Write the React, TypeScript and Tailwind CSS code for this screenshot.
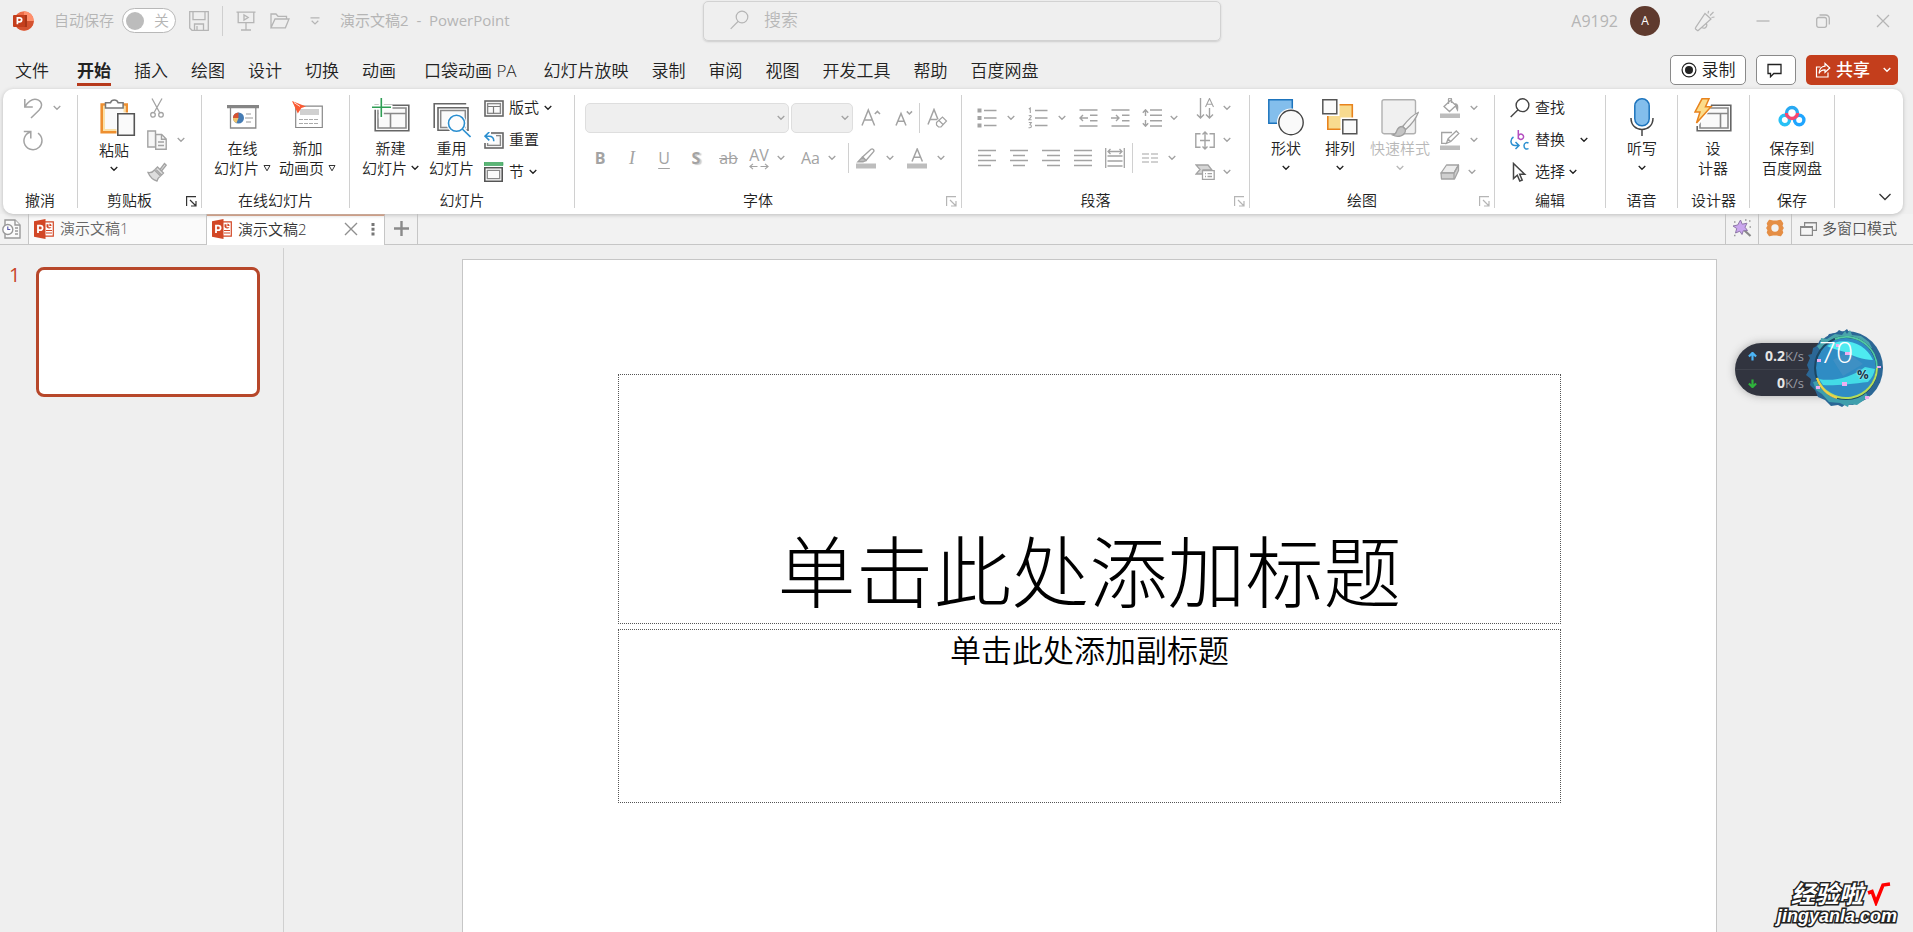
import type { ReactNode } from 'react';

const menuTabs = [
  '开始', '插入', '绘图', '设计', '切换', '动画', '口袋动画 PA', '幻灯片放映',
  '录制', '审阅', '视图', '开发工具', '帮助', '百度网盘',
];

function Chevron({ className = '' }: { className?: string }) {
  return (
    <svg className={`shrink-0 ${className}`} width="8" height="6" viewBox="0 0 8 6" fill="none" stroke="currentColor" strokeWidth="1.3">
      <path d="M.7 1 4 4.3 7.3 1" />
    </svg>
  );
}

function Triangle() {
  return (
    <svg className="shrink-0" width="8" height="8" viewBox="0 0 8 8" fill="none" stroke="#333">
      <path d="M1 1.5h6L4 6.8Z" />
    </svg>
  );
}

function Launcher({ muted = false }: { muted?: boolean }) {
  return (
    <button aria-label="更多选项" className={`w-5 flex justify-center ${muted ? 'text-[#b5b5b5]' : 'text-[#333]'}`}>
      <svg width="11" height="11" viewBox="0 0 11 11" fill="none" stroke="currentColor" strokeWidth="1.2">
        <path d="M.6 10V.6H10M4 4l5.5 5.5M10 5v5H5" />
      </svg>
    </button>
  );
}

function Group({ label, className, launcher, children }: {
  label: string;
  className: string;
  launcher?: 'on' | 'muted';
  children: ReactNode;
}) {
  return (
    <section aria-label={label} className={`flex flex-col shrink-0 my-1.5 border-r border-[#d0d0d0] ${className}`}>
      <div className="flex-1 flex items-start">{children}</div>
      <div className="flex h-3 leading-3">
        <span className="flex-1 -mt-0.5 text-center whitespace-nowrap">{label}</span>
        {launcher && <Launcher muted={launcher === 'muted'} />}
      </div>
    </section>
  );
}

function BigButton({ icon, lines, className = '' }: { icon: ReactNode; lines: ReactNode[]; className?: string }) {
  return (
    <button className={`flex flex-col items-center shrink-0 pt-[3px] ${className}`}>
      <span className="h-10">{icon}</span>
      {lines.map((line, i) => (
        <span key={i} className="h-5 leading-5 flex items-center gap-1 whitespace-nowrap">{line}</span>
      ))}
    </button>
  );
}

function SmallButton({ icon, label, text, drop = '' }: { icon: ReactNode; label: string; text?: boolean; drop?: string }) {
  return (
    <button aria-label={label} className="flex items-center h-[26px]">
      {icon}
      {text && <span className="ml-[5px] pb-0.5">{label}</span>}
      {drop && <Chevron className={drop} />}
    </button>
  );
}

function Tool({ label, className = '', drop = '', children }: { label: string; className?: string; drop?: string; children: ReactNode }) {
  return (
    <button aria-label={label} className={`flex items-center shrink-0 ${className}`}>
      {children}
      {drop && <Chevron className={drop} />}
    </button>
  );
}

function AppLogo() {
  return (
    <svg width="22" height="22" viewBox="0 0 22 22">
      <circle cx="12" cy="11" r="9.8" fill="#ed6c47" />
      <path d="M12 1.2A9.8 9.8 0 0 1 21.8 11H12Z" fill="#ff8f6b" />
      <path d="M2.3 12A9.8 9.8 0 0 0 21.8 11H12Z" fill="#d35230" />
      <path d="M6 5h9v12H6z" fill="#a83518" />
      <rect x="1" y="5" width="12" height="12" rx="1" fill="#c43e1c" />
      <path d="M5.4 14.3V7.8h2.3a2 2 0 0 1 0 4H5.6" fill="none" stroke="#fff" strokeWidth="1.7" />
    </svg>
  );
}

function DocIcon() {
  return (
    <svg width="20" height="20" viewBox="0 0 20 20">
      <path d="M10 2.8h9.3v14.4H10z" fill="#fff" stroke="#d24726" strokeWidth="1.2" />
      <path d="M12.5 5.2h2v3h3A3 3 0 0 1 12.5 8Z" fill="#d24726" />
      <path d="M15.4 4.6a2.6 2.6 0 0 1 2.3 2.4h-2.3Z" fill="#d24726" />
      <path d="M12 11.5h6M12 14h6" stroke="#d24726" strokeWidth="1.2" />
      <path d="M0 2.3 11.5 0v20L0 17.7Z" fill="#d24726" />
      <path d="M4 14V6.6h2.3a2.2 2.2 0 0 1 0 4.6H4" fill="none" stroke="#fff" strokeWidth="1.8" />
    </svg>
  );
}

function TitleBar() {
  return (
    <header className="flex items-center h-[42px] text-[#b5b5b5]">
      <div className="flex-1 flex items-center pl-3 pb-px">
        <AppLogo />
        <span className="ml-5">自动保存</span>
        <button role="switch" aria-checked="false" aria-label="自动保存" className="ml-2 w-[54px] h-[25px] rounded-full border border-[#b8b8b8] bg-white flex items-center justify-between pl-[3px] pr-[6px]">
          <span className="w-[18px] h-[18px] rounded-full bg-[#bcbcbc]" />
          <span>关</span>
        </button>
        <button aria-label="保存" className="ml-[13px]">
          <svg width="20" height="20" viewBox="0 0 20 20" fill="none" stroke="currentColor" strokeWidth="1.3">
            <path d="M.7.7h18.6v18.6H3L.7 17ZM4 .7v8h12v-8M5.5 19v-6h9v6M8 19v-4" />
          </svg>
        </button>
        <span className="ml-[13px] w-px h-[30px] bg-[#cfcfcf]" />
        <button aria-label="从头开始" className="ml-[13px]">
          <svg width="20" height="20" viewBox="0 0 20 20" fill="none" stroke="currentColor" strokeWidth="1.3">
            <path d="M.5 1.2h19M2.2 1.2v10.5h15.6V1.2M10 12v7M5 19h10" />
            <path d="M8 4v5l4.2-2.5Z" />
          </svg>
        </button>
        <button aria-label="打开" className="ml-[14px]">
          <svg width="20" height="18" viewBox="0 0 20 18" fill="none" stroke="currentColor" strokeWidth="1.3">
            <path d="M1 15.8V2h5l2 2.3h8.5V7M1 15.8 5 7h14l-3.6 8.8Z" />
          </svg>
        </button>
        <button aria-label="自定义快速访问工具栏" className="ml-5">
          <svg width="10" height="8" viewBox="0 0 10 8" fill="none" stroke="currentColor" strokeWidth="1.2">
            <path d="M.5.8h9M1.7 3.8 5 7l3.3-3.2" />
          </svg>
        </button>
        <h1 className="ml-5 whitespace-pre font-normal">演示文稿2  -  PowerPoint</h1>
      </div>
      <label className="ml-[22px] w-[518px] h-10 flex items-center rounded-[5px] border border-[#d2d2d2] shadow-[0_1px_2px_#ccc] pl-[26px] pb-0.5">
        <svg width="19" height="20" viewBox="0 0 19 20" fill="none" stroke="currentColor" strokeWidth="1.2">
          <circle cx="12" cy="7" r="5.8" />
          <path d="m8 11.5-7.3 7.3" />
        </svg>
        <input aria-label="搜索" placeholder="搜索" className="ml-[15px] flex-1 bg-transparent outline-none text-[17px] placeholder:text-[#b8b8b8]" />
      </label>
      <div className="flex-1 flex items-center justify-end pr-[23px] pb-px">
        <span className="text-base font-normal">A9192</span>
        <button aria-label="账户" className="ml-3 w-[30px] h-[30px] rounded-full bg-[#5f3a2e] text-white text-xs font-normal">A</button>
        <button aria-label="即将推出" className="ml-[34px]">
          <svg width="22" height="22" viewBox="0 0 22 22" fill="none" stroke="currentColor" strokeWidth="1.2">
            <path d="M11 3.5 17 9 4.5 20.3a1 1 0 0 1-1.4 0L1.6 19a1 1 0 0 1 0-1.3ZM8 17.5a3 3 0 0 0 4.5-3.7M14 3.5l.6-2.6M16 5.5 19.5 2M17.5 7.5l3-.5" />
          </svg>
        </button>
        <button aria-label="最小化" className="ml-10">
          <svg width="14" height="14" viewBox="0 0 14 14" stroke="currentColor" strokeWidth="1.3"><path d="M.5 7h13" /></svg>
        </button>
        <button aria-label="还原" className="ml-[46px]">
          <svg width="14" height="14" viewBox="0 0 14 14" fill="none" stroke="currentColor" strokeWidth="1.3">
            <rect x=".7" y="3.5" width="9.8" height="9.8" rx="2" />
            <path d="M3.5 1h6.2A3.6 3.6 0 0 1 13.3 4.6v6" />
          </svg>
        </button>
        <button aria-label="关闭" className="ml-[46px]">
          <svg width="14" height="14" viewBox="0 0 14 14" stroke="currentColor" strokeWidth="1.3"><path d="m1 1 12 12M13 1 1 13" /></svg>
        </button>
      </div>
    </header>
  );
}

function MenuBar() {
  return (
    <nav className="flex items-center h-[47px] pb-1 pl-[15px] pr-[15px] pt-[13px] text-[17px] text-[#222]">
      <div className="flex-1 flex items-center pt-px">
        <button className="mr-7">文件</button>
        {menuTabs.map((tab) => (
          <button
            key={tab}
            className={`h-[30px] pt-0.5 whitespace-nowrap border-b-[3px] ${
              tab === '开始' ? 'font-bold border-[#b7391b]' : 'border-transparent'
            } ${tab === '动画' ? 'mr-7' : tab === '口袋动画 PA' ? 'mr-[27px]' : 'mr-[23px]'}`}
          >
            {tab}
          </button>
        ))}
      </div>
      <button className="h-[30px] w-[76px] rounded-[5px] border border-[#8a8a8a] bg-white flex items-center justify-center gap-[5px]">
        <svg width="16" height="16" viewBox="0 0 16 16">
          <circle cx="8" cy="8" r="6.9" fill="none" stroke="#222" strokeWidth="1.2" />
          <circle cx="8" cy="8" r="4" fill="#222" />
        </svg>
        录制
      </button>
      <button aria-label="批注" className="ml-[10px] h-[30px] w-10 rounded-[5px] border border-[#8a8a8a] bg-white flex items-center justify-center">
        <svg className="-ml-1" width="15" height="15" viewBox="0 0 15 15" fill="none" stroke="#222" strokeWidth="1.3">
          <path d="M1 1.5h13v9H6.8L3.5 13.8v-3.3H1Z" />
        </svg>
      </button>
      <button className="ml-[10px] h-[30px] w-[92px] rounded-[5px] bg-[#c43e1c] text-white flex items-center pl-[9px]">
        <svg width="16" height="16" viewBox="0 0 16 16" fill="none" stroke="currentColor" strokeWidth="1.2">
          <path d="M5.5 5H1.5v10H13v-4.5M10 1.5 14.8 6 10 10.3V7.8C7 7.8 5 9 4 11.5c0-4 2.5-7 6-7.3Z" />
        </svg>
        <span className="ml-[5px] font-medium">共享</span>
        <Chevron className="ml-[13px]" />
      </button>
    </nav>
  );
}

function SlideFrame() {
  return (
    <>
      <rect x="1" y="1" width="18" height="15" fill="#fff" stroke="#666" strokeWidth="1.6" />
      <rect x="3.6" y="3.6" width="12.8" height="9.8" fill="#fafafa" stroke="#888" strokeWidth="1.4" />
    </>
  );
}

function HLines({ rows }: { rows: [number, number][] }) {
  return (
    <svg width="18" height="18" viewBox="0 0 18 18" stroke="currentColor" strokeWidth="1.4">
      {rows.map(([x1, x2], i) => (
        <path key={i} d={`M${x1} ${1.5 + i * 5}H${x2}`} />
      ))}
    </svg>
  );
}

function UndoGroup() {
  return (
    <Group label="撤消" className="w-[75px]">
      <div className="flex flex-col gap-1.5 pl-5 text-[#a3a3a3]">
        <SmallButton
          label="撤消"
          drop="ml-2.5"
          icon={
            <svg width="20" height="22" viewBox="0 0 20 22" fill="none" stroke="currentColor" strokeWidth="1.5">
              <path d="M1.8 2v8h8M2 9.6C6 3.5 11 1 15.5 3.2c4 2.2 4 6.8.5 10L8 21" />
            </svg>
          }
        />
        <SmallButton
          label="恢复"
          icon={
            <svg width="21" height="21" viewBox="0 0 21 21" fill="none" stroke="currentColor" strokeWidth="1.5">
              <path d="M.8 1.5h7v7M7.5 2A9 9 0 1 0 15 3.2" />
            </svg>
          }
        />
      </div>
    </Group>
  );
}

function ClipboardGroup() {
  return (
    <Group label="剪贴板" className="w-[124px]" launcher="on">
      <button className="ml-5 w-[36px] pt-[3px] flex flex-col items-start">
        <svg className="ml-0.5" width="36" height="41" viewBox="0 0 36 41">
          <path d="M1.7 6.5h25v27.8h-25z" fill="#fafafa" stroke="#ee8f2f" strokeWidth="2.6" />
          <path d="M4 9h20.5v23H4z" fill="none" stroke="#fbe0a6" strokeWidth="2" />
          <path d="M5.5 10V4.8h5a4 4 0 0 1 7.6 0h5V10Z" fill="#fff" stroke="#777" strokeWidth="1.5" />
          <path d="M16.5 14.5h19v24h-19z" fill="#fff" />
          <path d="M17.8 15.8h16.5v21.5H17.8z" fill="#fafafa" stroke="#555" strokeWidth="1.6" />
        </svg>
        <span className="ml-px leading-5 mt-px">粘贴</span>
        <Chevron className="ml-3 mt-1.5" />
      </button>
      <div className="flex flex-col gap-1.5 ml-[13px] text-[#a3a3a3]">
        <SmallButton
          label="剪切"
          icon={
            <svg width="20" height="20" viewBox="0 0 20 20" fill="none" stroke="currentColor" strokeWidth="1.3">
              <path d="m5 .5 7.6 14M15 .5 7.4 14" />
              <circle cx="6" cy="16.8" r="2.3" />
              <circle cx="14" cy="16.8" r="2.3" />
            </svg>
          }
        />
        <SmallButton
          label="复制"
          drop="ml-2.5"
          icon={
            <svg width="20" height="20" viewBox="0 0 20 20" fill="#f6f6f6" stroke="currentColor" strokeWidth="1.4">
              <path d="M.8 1h7.7v16H.8z" />
              <path d="M8.7 4.5h6l4.5 4.5v10.2H8.7zM14.5 4.5v4.7h4.7M11 12h6M11 15.5h6" />
            </svg>
          }
        />
        <SmallButton
          label="格式刷"
          icon={
            <svg width="20" height="20" viewBox="0 0 20 20" fill="#ddd" stroke="currentColor" strokeWidth="1.3">
              <path d="M1 10.5c3 .5 5-.5 6.5-2.5l6 6c-1.5 1-3 3-3.5 5C6 18 3 15 1 10.5Z" />
              <path d="m8.5 7 2-2 6 6-2 2ZM13 7.500l4.500-6 1.700 1.600L14.500 9" />
            </svg>
          }
        />
      </div>
    </Group>
  );
}

function OnlineGroup() {
  return (
    <Group label="在线幻灯片" className="w-[148px]">
      <BigButton
        className="ml-3"
        lines={['在线', <>幻灯片 <Triangle /></>]}
        icon={
          <svg width="34" height="32" viewBox="0 0 34 32">
            <path d="M4.5 9h25.3v21H4.5z" fill="#fff" stroke="#888" strokeWidth="1.3" />
            <path d="M1 7h32v3.2H1z" fill="#858585" />
            <circle cx="12.5" cy="20" r="5.5" fill="#457cb4" />
            <path d="M12.5 20V14.5a5.5 5.5 0 0 0-5.5 5.5Z" fill="#d9532f" />
            <path d="M12.5 20H7a5.5 5.5 0 0 0 3.5 5.1Z" fill="#f2c46c" />
            <path d="M20 16h5M19 20h8M20 24h5" stroke="#999" strokeWidth="1.1" />
          </svg>
        }
      />
      <BigButton
        className="ml-2"
        lines={['新加', <>动画页 <Triangle /></>]}
        icon={
          <svg width="32" height="32" viewBox="0 0 32 32">
            <path d="M3.7 8.2h26.6v21.3H3.7z" fill="#fff" stroke="#888" strokeWidth="1.2" />
            <path d="M8 11h19v6H8z" fill="#d0d0d0" />
            <path d="M7 21.500h20M7 25.500h20" stroke="#aaa" strokeDasharray="4 1" />
            <path d="m0 3 14 5.5-4.6 1.6-3.6 5.4Z" fill="#fb5a33" />
            <path d="m2 4.5 6 4" stroke="#fff" strokeWidth=".8" />
          </svg>
        }
      />
    </Group>
  );
}

function SlidesGroup() {
  return (
    <Group label="幻灯片" className="w-[225px]">
      <BigButton
        className="ml-3"
        lines={['新建', <>幻灯片 <Chevron /></>]}
        icon={
          <svg width="38" height="38" viewBox="0 0 38 38">
            <path d="M3.2 7.2h33.6v25.6H3.2z" fill="#fafafa" stroke="#666" strokeWidth="1.6" />
            <path d="M6 10h28v20H6zM6 15.5h28M18.5 15.5V30" fill="none" stroke="#888" strokeWidth="1.6" />
            <path d="M9.3 0v20.5M0 9.3h20.5" stroke="#fff" strokeWidth="5" />
            <path d="M9.3 0v19M0 9.3h19" stroke="#2f9e55" strokeWidth="1.6" />
          </svg>
        }
      />
      <BigButton
        className="ml-2.5"
        lines={['重用', '幻灯片']}
        icon={
          <svg width="38" height="40" viewBox="0 0 38 40">
            <path d="M1.2 30V5.8h32" fill="none" stroke="#666" strokeWidth="1.6" />
            <path d="M5 9.8h30v22.5H5z" fill="#fafafa" stroke="#666" strokeWidth="1.6" />
            <path d="M7.7 12.5h24.6v17H7.7z" fill="none" stroke="#888" strokeWidth="1.5" />
            <circle cx="23.5" cy="25.3" r="10" fill="#fff" />
            <path d="m29.3 31 8.2 8" stroke="#fff" strokeWidth="4.5" />
            <circle cx="23.5" cy="25.3" r="8" fill="#fdfdfd" stroke="#2b8fd0" strokeWidth="1.6" />
            <path d="m29.3 31 8.2 8" stroke="#2b8fd0" strokeWidth="1.6" />
          </svg>
        }
      />
      <div className="flex flex-col gap-1.5 ml-2.5">
        <SmallButton
          label="版式"
          text
          drop="ml-[5px]"
          icon={
            <svg width="20" height="17" viewBox="0 0 20 17">
              <SlideFrame />
              <path d="M4 6.5h12M9.5 6.5v7" stroke="#777" strokeWidth="1.2" />
            </svg>
          }
        />
        <SmallButton
          label="重置"
          text
          icon={
            <svg width="20" height="17" viewBox="0 0 20 17">
              <SlideFrame />
              <path d="M0 0h7v3h5v8H0z" fill="#fff" />
              <path d="M5.3 0 1 4.2 5.3 8.3M1.2 4.2H5c3.5 0 4.8 2.5 4.8 5" fill="none" stroke="#2b8fd0" strokeWidth="1.6" />
            </svg>
          }
        />
        <SmallButton
          label="节"
          text
          drop="ml-[5px]"
          icon={
            <svg width="20" height="20" viewBox="0 0 20 20">
              <path d="M0 .3h19v3.2H0z" fill="#5bb474" stroke="#2f9e55" strokeWidth=".6" />
              <path d="M.8 5.8h17.4v13.4H.8z" fill="#fff" stroke="#555" strokeWidth="1.6" />
              <path d="M3.3 8.3h12.4v8.4H3.3z" fill="#fafafa" stroke="#888" strokeWidth="1.3" />
            </svg>
          }
        />
      </div>
    </Group>
  );
}

function FontGroup() {
  return (
    <Group label="字体" className="w-[387px]" launcher="muted">
      <div className="pt-2 pl-2.5 flex flex-col gap-2.5 text-[#a3a3a3]">
        <div className="flex items-center h-[30px]">
          <div className="relative">
            <select aria-label="字体" disabled className="appearance-none w-[204px] h-[30px] rounded-[5px] border border-[#dedede] bg-[#efefef]" />
            <Chevron className="absolute right-1 top-3" />
          </div>
          <div className="relative ml-0.5">
            <select aria-label="字号" disabled className="appearance-none w-[62px] h-[30px] rounded-[5px] border border-[#dedede] bg-[#efefef]" />
            <Chevron className="absolute right-1 top-3" />
          </div>
          <Tool label="增大字号" className="ml-2">
            <svg width="20" height="20" viewBox="0 0 20 20" fill="none" stroke="currentColor" strokeWidth="1.5">
              <path d="M1 17.5 7.3 2l6.3 15.5M3.2 12h8.2M13.8 6l2.6-2.6L19 6" />
            </svg>
          </Tool>
          <Tool label="减小字号" className="ml-3.5">
            <svg width="18" height="20" viewBox="0 0 18 20" fill="none" stroke="currentColor" strokeWidth="1.5">
              <path d="M1 17.5 6 5.5l5 12M2.6 13.3h7M11.8 3.4 14.4 6 17 3.4" />
            </svg>
          </Tool>
          <span className="ml-1.5 w-px h-[30px] bg-[#d0d0d0]" />
          <Tool label="清除格式" className="ml-[7px]">
            <svg width="21" height="20" viewBox="0 0 21 20" fill="none" stroke="currentColor" strokeWidth="1.5">
              <path d="M1 16.5 7 1.5l4 10M3 11.5h7" />
              <path d="m9.5 14.5 6-5.5 4 4-5.5 6h-2.5l-2-2ZM12 12.5l4 4" strokeWidth="1.2" />
            </svg>
          </Tool>
        </div>
        <div className="flex items-center h-[30px] -ml-px text-base leading-5 font-normal">
          <Tool label="加粗" className="w-8 justify-center font-bold">B</Tool>
          <Tool label="倾斜" className="w-8 justify-center italic font-['Liberation_Serif',serif] text-lg">I</Tool>
          <Tool label="下划线" className="w-8 justify-center underline underline-offset-4">U</Tool>
          <Tool label="文字阴影" className="w-8 justify-center font-bold text-shadow-[2px_1px_1px_#ccc]">S</Tool>
          <Tool label="删除线" className="w-[33px] justify-center line-through">ab</Tool>
          <Tool label="字符间距" className="ml-1" drop="ml-2">
            <span className="flex flex-col items-center leading-4">
              AV
              <svg width="20" height="7" viewBox="0 0 20 7" fill="none" stroke="currentColor" strokeWidth="1.1">
                <path d="M4 .8.9 3.5 4 6.2M1 3.5h7.5M16 .8l3.1 2.7L16 6.2M19 3.5h-7.5" />
              </svg>
            </span>
          </Tool>
          <Tool label="更改大小写" className="ml-4" drop="ml-2">
            <span>Aa</span>
          </Tool>
          <span className="ml-3 w-px h-[30px] bg-[#d0d0d0]" />
          <Tool label="文本突出显示颜色" className="ml-[7px]" drop="ml-2.5">
            <svg width="20" height="21" viewBox="0 0 20 21" fill="none" stroke="currentColor" strokeWidth="1.4">
              <path d="M0 15.5h20v5H0z" fill="#bdbdbd" stroke="none" />
              <path d="M6.5 9 15 1.3a1.8 1.8 0 0 1 2.6 2.4L10 12.5Z" />
              <path d="m6.5 9 3.5 3.5-3 1.3H2Z" fill="#bdbdbd" />
            </svg>
          </Tool>
          <Tool label="字体颜色" className="ml-[13px]" drop="ml-2.5">
            <svg width="20" height="21" viewBox="0 0 20 21" fill="none" stroke="currentColor" strokeWidth="1.5">
              <path d="M0 15.5h20v5H0z" fill="#bdbdbd" stroke="none" />
              <path d="M5 13.5 10.2 1l5.2 12.5M6.8 9.3h6.8" />
            </svg>
          </Tool>
        </div>
      </div>
    </Group>
  );
}

function ParagraphGroup() {
  return (
    <Group label="段落" className="w-[288px]" launcher="muted">
      <div className="pt-2 pl-[15px] w-[219px] flex flex-col gap-2.5 text-[#a3a3a3]">
        <div className="flex items-center h-[30px]">
          <Tool label="项目符号" drop="ml-2.5">
            <svg width="20" height="20" viewBox="0 0 20 20" stroke="currentColor" strokeWidth="1.4">
              <path d="M7 2.5h12.5M7 10h12.5M7 17.5h12.5" />
              <path d="M.5 2.5h4M.5 10h4M.5 17.5h4" strokeWidth="4" />
            </svg>
          </Tool>
          <Tool label="编号" className="ml-[13px]" drop="ml-2.5">
            <svg width="20" height="22" viewBox="0 0 20 22" fill="none" stroke="currentColor" strokeWidth="1.3">
              <path d="M7 3.5h12.5M7 11h12.5M7 18.5h12.5" />
              <path d="m.8 2 1.5-1v5M.8 9c1-1 2.7-.5 2.3.8L.8 12.8h2.8M.8 15.5h2.5L2 17.7c1.8 0 2 3-.2 3H.5" strokeWidth="1.1" />
            </svg>
          </Tool>
          <Tool label="降低列表级别" className="ml-[13px]">
            <svg width="19" height="18" viewBox="0 0 19 18" fill="none" stroke="currentColor" strokeWidth="1.4">
              <path d="M.5 1h18M11 6.3h7.5M11 11.7h7.5M.5 17h18M9 9H1.2M4 6 1 9l3 3" />
            </svg>
          </Tool>
          <Tool label="提高列表级别" className="ml-[13px]">
            <svg width="19" height="18" viewBox="0 0 19 18" fill="none" stroke="currentColor" strokeWidth="1.4">
              <path d="M.5 1h18M11 6.3h7.5M11 11.7h7.5M.5 17h18M0 9h7.8M5 6l3 3-3 3" />
            </svg>
          </Tool>
          <Tool label="行距" className="ml-3" drop="ml-2">
            <svg width="20" height="18" viewBox="0 0 20 18" fill="none" stroke="currentColor" strokeWidth="1.4">
              <path d="M8 1h12M8 6.3h12M8 11.7h12M8 17h12M3.5 1v6M3.5 11v6M.8 3.8l2.7-3 2.7 3M.8 14.2l2.7 3 2.7-3" />
            </svg>
          </Tool>
        </div>
        <div className="flex items-center h-[30px] pl-px">
          <Tool label="左对齐"><HLines rows={[[0, 18], [0, 13], [0, 18], [0, 13]]} /></Tool>
          <Tool label="居中" className="ml-3.5"><HLines rows={[[0, 18], [3, 15], [0, 18], [3, 15]]} /></Tool>
          <Tool label="右对齐" className="ml-3.5"><HLines rows={[[0, 18], [5, 18], [0, 18], [5, 18]]} /></Tool>
          <Tool label="两端对齐" className="ml-3.5"><HLines rows={[[0, 18], [0, 18], [0, 18], [0, 18]]} /></Tool>
          <Tool label="分散对齐" className="ml-[13px]">
            <svg width="20" height="20" viewBox="0 0 20 20" fill="none" stroke="currentColor" strokeWidth="1.3">
              <path d="M.7 0v20M19.3 0v20M2.5 8h15M2.5 13h15M2.5 18h15M3 3.5h14M5.5 1 3 3.5 5.5 6M14.5 1 17 3.5 14.5 6" />
            </svg>
          </Tool>
          <span className="ml-[7px] w-px h-[30px] bg-[#d0d0d0]" />
          <Tool label="分栏" className="ml-[9px]" drop="ml-2.5">
            <svg width="16" height="10" viewBox="0 0 16 10" stroke="currentColor" strokeWidth="1.2">
              <path d="M0 1h7M9 1h7M0 5h7M9 5h7M0 9h7M9 9h7" />
            </svg>
          </Tool>
        </div>
      </div>
      <div className="flex flex-col gap-1.5 ml-3.5 text-[#a3a3a3]">
        <SmallButton
          label="文字方向"
          drop="ml-2"
          icon={
            <svg width="20" height="21" viewBox="0 0 20 21" fill="none" stroke="currentColor" strokeWidth="1.4">
              <path d="M5.5 0v19.5M2 16.5l3.5 3.5L9 16.5M14.5 10v9.5M11 16.5l3.5 3.5 3.5-3.5" />
              <path d="m10.5 9 4-8.5 4 8.5M12 6.3h5" strokeWidth="1.1" />
            </svg>
          }
        />
        <SmallButton
          label="对齐文本"
          drop="ml-2"
          icon={
            <svg width="20" height="19" viewBox="0 0 20 19" fill="none" stroke="currentColor" strokeWidth="1.4">
              <path d="M5.5 2.7H.8v13.6h4.7M14.5 2.7h4.7v13.6h-4.7M5 9.5h10M10 1v17M7.5 3.5 10 1l2.5 2.5M7.5 15.5 10 18l2.5-2.5" />
            </svg>
          }
        />
        <SmallButton
          label="转换为 SmartArt"
          drop="ml-2"
          icon={
            <svg width="20" height="16" viewBox="0 0 20 16" stroke="currentColor" strokeWidth="1.3">
              <path d="M1 1h12l4 5H8v4H1l4-4.5Z" fill="#d6d6d6" />
              <path d="M7.5 6.7h11.7v8.6H7.5z" fill="#fff" />
              <path d="M10 9.7h1M12.5 9.7H17M10 12.5h1M12.5 12.5H17" />
            </svg>
          }
        />
      </div>
    </Group>
  );
}

function DrawingGroup() {
  return (
    <Group label="绘图" className="w-[245px]" launcher="muted">
      <BigButton
        className="ml-[18px]"
        lines={['形状', <Chevron />]}
        icon={
          <svg width="36" height="38" viewBox="0 0 36 38">
            <path d="M.8 1.8h23.5v23.5H.8z" fill="#83beec" stroke="#1d74bd" strokeWidth="1.5" />
            <circle cx="23" cy="24.5" r="14" fill="#fff" />
            <circle cx="23" cy="24.5" r="12.2" fill="#fafafa" stroke="#444" strokeWidth="1.4" />
          </svg>
        }
      />
      <BigButton
        className="ml-[18px]"
        lines={['排列', <Chevron />]}
        icon={
          <svg width="36" height="38" viewBox="0 0 36 38">
            <path d="M5.8 6.8h24.5v24.5H5.8z" fill="#f8db8f" stroke="#e8831d" strokeWidth="1.6" />
            <path d="M0 0h17.5v18H0zM18.5 19.5H36V38H18.5z" fill="#fff" />
            <path d="M.8 1.8h14v14h-14zM20.8 21.8h14v14h-14z" fill="#fafafa" stroke="#555" strokeWidth="1.5" />
          </svg>
        }
      />
      <BigButton
        className="ml-3 text-[#b8b8b8]"
        lines={['快速样式', <Chevron />]}
        icon={
          <svg width="38" height="39" viewBox="0 0 38 39">
            <rect x="1" y="1.7" width="33.5" height="34" rx="2" fill="#f0f0f0" stroke="#b0b0b0" strokeWidth="1.4" />
            <path d="M37.2 14.5c-5 2-12 9.5-15.5 14l3 3c4.5-4 10.5-11 12.5-17Z" fill="#f5f5f5" stroke="#a0a0a0" strokeWidth="1.3" />
            <path d="M21.5 28.5c-4 0-5 2-6 5-.5 2-2 3-4 3.5 5 2.5 13 1.5 13-5.5Z" fill="#c4c4c4" stroke="#a0a0a0" strokeWidth="1.3" />
          </svg>
        }
      />
      <div className="flex flex-col gap-1.5 ml-2.5 text-[#a3a3a3]">
        <SmallButton
          label="形状填充"
          drop="ml-2.5"
          icon={
            <svg width="20" height="20" viewBox="0 0 20 20" fill="none" stroke="currentColor" strokeWidth="1.3">
              <path d="M0 15.5h20V20H0z" fill="#bdbdbd" stroke="none" />
              <path d="m4 8.5 6.5-6 5.5 5-6.5 6ZM8.5 6V1.5a1.5 1.5 0 0 1 3 0V5" />
              <path d="M15.5 6c2 0 2.5 2 2 6-1.5-2-2-3-2-6Z" fill="#a3a3a3" />
            </svg>
          }
        />
        <SmallButton
          label="形状轮廓"
          drop="ml-2.5"
          icon={
            <svg width="20" height="20" viewBox="0 0 20 20" fill="none" stroke="currentColor" strokeWidth="1.3">
              <path d="M0 15.5h20V20H0z" fill="#bdbdbd" stroke="none" />
              <path d="M12 2.5H1.7v10.8H6M6.5 13.3 8 8.8 16.3 1l2.5 2.5-8 8ZM8 9l2.8 2.8" />
            </svg>
          }
        />
        <SmallButton
          label="形状效果"
          drop="ml-2"
          icon={
            <svg width="20" height="16" viewBox="0 0 20 16" stroke="currentColor" strokeWidth="1.3" strokeLinejoin="round">
              <path d="M6.5 1h12L14 9H1Z" fill="#ececec" />
              <path d="M18.5 1v5.5l-4 8.5h-13L1 9h13Z" fill="#cfcfcf" />
              <path d="M18.5 1 14 9v6" fill="none" />
            </svg>
          }
        />
      </div>
    </Group>
  );
}

function EditGroup() {
  return (
    <Group label="编辑" className="w-[111px]">
      <div className="flex flex-col gap-1.5 ml-[15px]">
        <SmallButton
          label="查找"
          text
          icon={
            <svg width="20" height="20" viewBox="0 0 20 20" fill="none" stroke="#444" strokeWidth="1.4">
              <circle cx="12.5" cy="7.2" r="6.4" />
              <path d="M8 11.7.7 19" />
            </svg>
          }
        />
        <SmallButton
          label="替换"
          text
          drop="ml-[15px]"
          icon={
            <svg width="20" height="20" viewBox="0 0 20 20" fill="none" strokeWidth="1.5">
              <path d="M8.3 0v9M8.3 6a2.7 2.7 0 1 1 0 1.5" stroke="#b44ec0" />
              <path d="M18.5 13.2c-1.8-1.3-4.5-.5-4.5 2.6s2.7 4 4.5 2.7M3.5 7C-.5 9.5.5 15.5 5 15.5h3.5M5.5 12 9 15.5 5.5 19" stroke="#2b8fd0" />
            </svg>
          }
        />
        <SmallButton
          label="选择"
          text
          drop="ml-1"
          icon={
            <svg width="20" height="20" viewBox="0 0 20 20" fill="none" stroke="#444" strokeWidth="1.5">
              <path d="M3.5 1.5v15l3.8-3.3 2.5 5.8 2.4-1-2.5-5.7h5Z" />
            </svg>
          }
        />
      </div>
    </Group>
  );
}

function Ribbon() {
  return (
    <div role="toolbar" aria-label="功能区" className="relative z-10 h-[125px] ml-[3px] mr-[10px] flex overflow-hidden rounded-[10px] bg-white shadow-[0_1px_4px_#bbb] text-[#222]">
      <UndoGroup />
      <ClipboardGroup />
      <OnlineGroup />
      <SlidesGroup />
      <FontGroup />
      <ParagraphGroup />
      <DrawingGroup />
      <EditGroup />
      <Group label="语音" className="w-[72px]">
        <BigButton
          className="ml-[21px]"
          lines={['听写', <Chevron />]}
          icon={
            <svg width="24" height="40" viewBox="0 0 24 40" fill="none">
              <rect x="4.8" y=".8" width="14.4" height="27" rx="7" fill="#83beec" stroke="#1d74bd" strokeWidth="1.5" />
              <path d="M1 20c0 7.5 5 11.5 11 11.5S23 27.5 23 20M12 31.5V38" stroke="#444" strokeWidth="1.5" />
            </svg>
          }
        />
      </Group>
      <Group label="设计器" className="w-[72px]">
        <BigButton
          className="ml-4"
          lines={['设', '计器']}
          icon={
            <svg width="38" height="38" viewBox="0 0 38 38" fill="none">
              <path d="M3.2 7.2h33.6v25.6H3.2z" fill="#fafafa" stroke="#666" strokeWidth="1.6" />
              <path d="M6 10h28v20H6zM6 15.5h28M26.5 15.5V30" stroke="#888" strokeWidth="1.6" />
              <path d="M0 0h18l-2 12L4 28H0Z" fill="#fff" />
              <path d="M8 .8h7l-3.5 8H17L2.5 25 6 14H1Z" fill="#fbdc8a" stroke="#e8831d" strokeWidth="1.5" />
            </svg>
          }
        />
      </Group>
      <Group label="保存" className="w-[85px]">
        <BigButton
          className="ml-3"
          lines={['保存到', '百度网盘']}
          icon={
            <svg width="28" height="34" viewBox="0 0 28 34" fill="none" strokeWidth="3.4">
              <circle cx="6.8" cy="22" r="4.7" stroke="#27c0f5" />
              <circle cx="21.2" cy="22" r="4.7" stroke="#1fa5ff" />
              <path d="M8.5 15a5.5 5.5 0 0 1 11 0" stroke="#29a9f2" />
              <path d="M8.5 15a5.5 5.5 0 0 0 11 0" stroke="#f8466f" />
            </svg>
          }
        />
      </Group>
      <div className="flex-1 flex items-end justify-end pr-3 pb-[13px]">
        <button aria-label="折叠功能区">
          <svg width="12" height="8" viewBox="0 0 12 8" fill="none" stroke="#333" strokeWidth="1.3"><path d="M.5 1 6 6.5 11.5 1" /></svg>
        </button>
      </div>
    </div>
  );
}

function DocumentTabs() {
  return (
    <div className="h-[31px] flex bg-[#f2f2f2] text-[#666]">
      <button aria-label="最近文档" className="w-[29px] border-r border-b border-[#c6c6c6] flex items-center pl-0.5">
        <svg width="20" height="20" viewBox="0 0 20 20" fill="#fafafa" stroke="#999" strokeWidth="1.4">
          <path d="M3 1h10l5 5v13H3z" />
          <path d="M13 1v5h5M13 9h3M13 12h3M13 15h3" />
          <circle cx="5.8" cy="10.5" r="5" fill="#fff" />
          <path d="M5.8 7.5v3h2.5" stroke="#55a" strokeWidth="1.1" fill="none" />
        </svg>
      </button>
      <button className="w-[178px] border-r border-b border-[#c6c6c6] bg-[#fafafa] flex items-center pl-[5px] pb-px gap-1.5">
        <DocIcon />
        演示文稿1
      </button>
      <div className="w-[178px] border-r border-r-[#c6c6c6] border-t-2 border-t-[#d98a63] bg-white flex items-center pl-[5px] pb-[3px] text-[#333]">
        <button className="flex items-center gap-1.5">
          <DocIcon />
          演示文稿2
        </button>
        <button aria-label="关闭文档" className="ml-[37px]">
          <svg width="14" height="14" viewBox="0 0 14 14" stroke="#8f8f8f" strokeWidth="1.4"><path d="m1 1 12 12M13 1 1 13" /></svg>
        </button>
        <button aria-label="文档菜单" className="ml-[13px]">
          <svg width="4" height="14" viewBox="0 0 4 14" fill="#777"><path d="M.5 1h3v3h-3zM.5 5.7h3v3h-3zM.5 10.5h3v3h-3z" /></svg>
        </button>
      </div>
      <button aria-label="新建文档" className="w-[33px] border-r border-b border-[#c6c6c6] flex items-center justify-center pb-0.5">
        <svg width="15" height="15" viewBox="0 0 15 15" stroke="#8a8a8a" strokeWidth="2.4"><path d="M7.5 0v15M0 7.5h15" /></svg>
      </button>
      <div className="flex-1 border-b border-[#c6c6c6] flex justify-end">
        <button aria-label="美化" className="w-[33px] border-l border-[#c6c6c6] flex items-center justify-center pb-0.5">
          <svg width="20" height="20" viewBox="0 0 20 20">
            <path d="m12 12 6.5 6" stroke="#888" strokeWidth="2.2" />
            <path d="m8.5 2 1.700 4.200L15 5.200l-2 4 2.500 3.300-4.200.2-1.300 3.800-2.200-3.300-4.300 1.800 1.200-4.500L1 8l4.700-1Z" fill="#c9a5ee" stroke="#8f78a8" />
            <path d="M13 2h1.500M2 4h1.500M17 3h1.500M2 17.500h1.500M17.500 9H19" stroke="#999" strokeWidth="1.5" />
          </svg>
        </button>
        <button aria-label="设置" className="w-[33px] border-l border-[#c6c6c6] flex items-center justify-center pb-0.5">
          <svg width="18" height="18" viewBox="0 0 18 18">
            <path d="M3.500 1.500 7 2.200h4l3.500-.7 2 3-.8 2.500 1.300 2-1.300 2 .8 2.500-2 3-3.500-.7H7l-3.500.7-2-3 .8-2.500L1 9l1.300-2-.8-2.500Z" fill="#e58e45" stroke="#e58e45" strokeWidth="1.500" strokeLinejoin="round" />
            <circle cx="9" cy="9" r="3.7" fill="#f2f2f2" />
          </svg>
        </button>
        <button className="border-l border-[#c6c6c6] flex items-center gap-[5px] pl-2 pr-4 pb-0.5 text-[#555]">
          <svg width="17" height="15" viewBox="0 0 17 15" fill="#f5f5f5" stroke="#888" strokeWidth="1.2">
            <path d="M4.6 1.6h11.8v7.8H4.6zM4.6 2h11.8" />
            <path d="M.6 5.6h11.8v8.8H.6zM.6 6.5h11.8" />
          </svg>
          多窗口模式
        </button>
      </div>
    </div>
  );
}

function NetworkWidget() {
  return (
    <div className="absolute right-[28px] top-[328px] w-[150px] h-20 font-['Open_Sans',sans-serif] font-normal">
      <div className="absolute left-0 top-[15px] w-[100px] h-[53px] rounded-l-full bg-[#31343f] shadow-[0_0_8px_#aaa] text-[#e6e6e6] leading-[26px]">
        <div className="flex items-center h-[27px] border-b border-[#3f424c] pl-[13px] pr-[31px]">
          <svg width="9" height="9" viewBox="0 0 10 10" fill="none" stroke="#4cb4f5" strokeWidth="2.4"><path d="M5 9.5v-8M1 5l4-4 4 4" /></svg>
          <span className="flex-1 text-right text-sm font-bold">0.2</span>
          <span className="text-[13px] font-medium text-[#9a9ca5]">K/s</span>
        </div>
        <div className="flex items-center h-[26px] pl-[13px] pr-[31px]">
          <svg width="9" height="9" viewBox="0 0 10 10" fill="none" stroke="#2fb33c" strokeWidth="2.4"><path d="M5 .5v8M1 5l4 4 4-4" /></svg>
          <span className="flex-1 text-right text-sm font-bold">0</span>
          <span className="text-[13px] font-medium text-[#9a9ca5]">K/s</span>
        </div>
      </div>
      <svg className="absolute right-0 top-0" width="80" height="80" viewBox="0 0 80 80" fill="none">
        <circle cx="41" cy="40" r="37" fill="#2b6796" />
        <path d="m5 30-2-3 4-1 1-6 4-2 3-6 6-1 3-5 7-1 3-3 4 2 4-3 2 3 8 1 7 6 5 3 5 7 3 6 2 1-1 5 3 4-3 5 2 5-5 4-1 8-6 5-2 5-8 3-5 5-7-1-4 3-4-2-7 1-6-6-7-3-3-7-5-5 1-6-5-4 3-5-2-5Z" fill="#2b6796" />
        <path d="m12 18 3-2 1-6 6 1 8-5 7 1 3-4 2 3 3-4 2 5 9 1 8 6 3 6-6 2C50 8 30 10 18 26Z" fill="#4aa5ab" />
        <path d="m8 54 3 8 6 4 7 8 11 1 8 4 1-3 8 1 11-8-3-6c-16 6-32 2-40-12Z" fill="#3f9fad" />
        <circle cx="41" cy="40" r="30" fill="#2f8cc4" />
        <path d="M22 18c16-10 38-4 46 14-10 0-20-4-28-8-6-2-12-3-18-6Z" fill="#4eeaf0" />
        <path d="M14 51c14 3 34-2 46-12l10 2c-1 5-3 9-7 13-16 2-36 4-45 3Z" fill="#43dbe6" />
        <path d="m28 32 14-8 16 12-20 12Z" fill="#4a93c4" opacity=".6" />
        <circle cx="41" cy="40" r="31" stroke="#1b4763" strokeWidth="2" />
        <path d="M72 40A31 31 0 0 0 30 11" stroke="#4fc9a4" strokeWidth="2" />
        <path d="M12 50a31 31 0 0 0 60-10" stroke="#b5dc5a" strokeWidth="2" />
        <path d="M12 50a31 31 0 0 0 20 20" stroke="#f0cf4a" strokeWidth="2" />
        <path d="M40 24h5v3h-5zM12 31h4v3h-4zM37 54h5v4h-5zM11 58h4v3h-4zM60 68h4v3h-4zM72 38h4v2h-4zM31 16h3v3h-3z" fill="#eeaef0" />
      </svg>
      <span className="absolute left-[84px] top-[7px] text-[30px] leading-[34px] text-white font-light">70</span>
      <span className="absolute left-[122px] top-[38px] text-[13px] leading-4 font-bold text-[#123b4d] text-shadow-[0_0_2px_#fff]">%</span>
    </div>
  );
}

function Watermark() {
  return (
    <div className="absolute right-4 bottom-[6px] flex flex-col items-end font-bold text-white [paint-order:stroke_fill] [-webkit-text-stroke:3px_#222]">
      <div className="flex items-center gap-1 pr-1.5">
        <span className="text-[24px] leading-6 italic">经验啦</span>
        <svg width="24" height="24" viewBox="0 0 24 24" fill="none" stroke="#f00" strokeWidth="3.5">
          <path d="m1 11 4-1.5 4 11L16 3l7-1" />
        </svg>
      </div>
      <span className="text-lg leading-5 italic font-['Liberation_Sans',sans-serif]">jingyanla.com</span>
    </div>
  );
}

export default function App() {
  return (
    <div className="relative h-screen flex flex-col overflow-hidden bg-[#efefef] text-[15px] font-[350] font-['Open_Sans','Noto_Sans_CJK_SC',sans-serif]">
      <TitleBar />
      <MenuBar />
      <Ribbon />
      <DocumentTabs />
      <main className="flex-1 min-h-0 flex pt-[3px]">
        <aside aria-label="幻灯片缩略图" className="w-[284px] shrink-0 border-r border-[#d0d0d0] flex items-start pt-[19px] pl-[9px]">
          <span className="w-[27px] text-xl leading-4 font-normal text-[#c8452a]">1</span>
          <button aria-label="幻灯片 1" className="w-[224px] h-[130px] rounded-lg border-[3px] border-[#b7472a] bg-white" />
        </aside>
        <div className="flex-1 overflow-hidden pt-[11px] pl-[178px] pr-[196px]">
          <div className="aspect-video border border-[#c6c6c6] bg-white pt-[114px] px-[155px] text-center text-black">
            <div className="h-[250px] border border-dotted border-[#555] flex items-end justify-center pb-2">
              <h2 className="text-[78px] leading-[86px] font-light whitespace-nowrap">单击此处添加标题</h2>
            </div>
            <div className="mt-[5px] h-[174px] border border-dotted border-[#555]">
              <p className="text-[31px] leading-10">单击此处添加副标题</p>
            </div>
          </div>
        </div>
      </main>
      <NetworkWidget />
      <Watermark />
    </div>
  );
}
